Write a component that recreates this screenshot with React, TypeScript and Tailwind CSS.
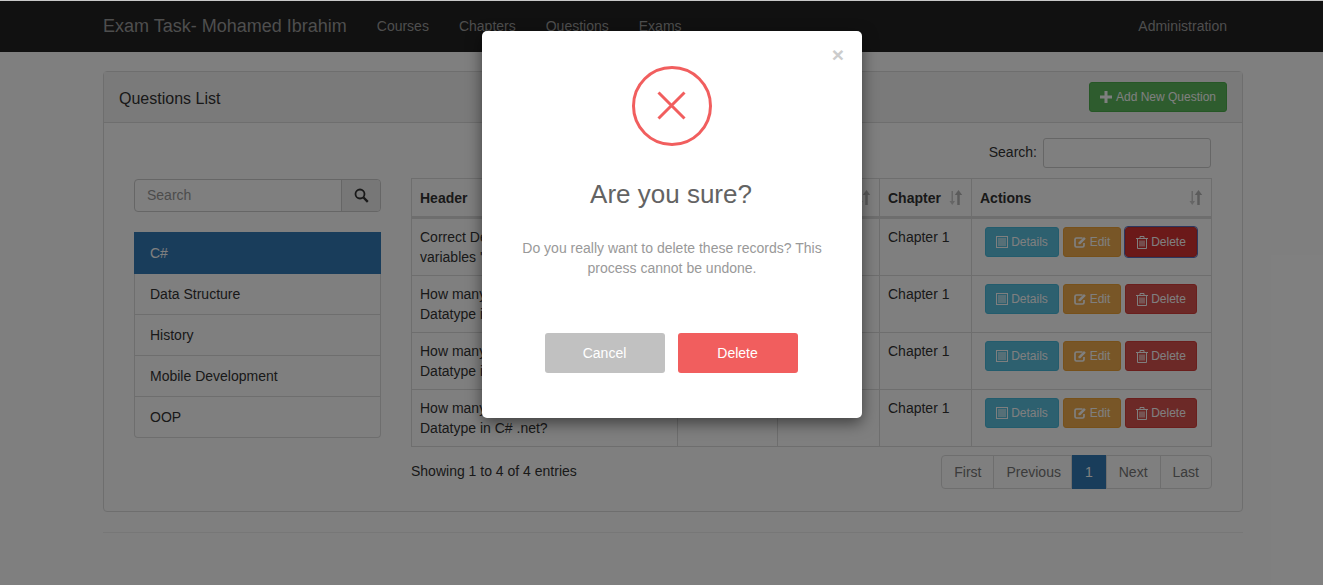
const TOPICS = ['Data Structure', 'History', 'Mobile Development', 'OOP']

const ROWS = [
  "Correct Declaration of Values to variables 'a' and 'b'?",
  'How many Bytes are stored by Long Datatype in C# .net?',
  'How many Bytes are stored by Int Datatype in C# .net?',
  'How many Bytes are stored by Byte Datatype in C# .net?',
]

const PAGES = ['First', 'Previous', '1', 'Next', 'Last']

function SortIcon() {
  return (
    <svg width="15" height="16" viewBox="0 0 15 16" className="text-[#333] opacity-35" fill="currentColor">
      <path d="M3.5 1h1.5v10h2l-2.75 4-2.75-4h2z" opacity="0.7" />
      <path d="M10.5 0l3.75 5h-2.5v10h-2.5V5H6.75z" />
    </svg>
  )
}

function PlusIcon() {
  return (
    <svg width="12" height="12" viewBox="0 0 12 12" fill="currentColor">
      <path d="M4.5 0h3v4.500h4.500v3H7.500v4.500h-3V7.500H0v-3h4.500z" />
    </svg>
  )
}

function SearchIcon() {
  return (
    <svg width="15" height="15" viewBox="0 0 15 15" fill="none" stroke="currentColor">
      <circle cx="6" cy="6" r="4.500" strokeWidth="1.800" />
      <path d="M9.500 9.500l4.300 4.300" strokeWidth="2.400" />
    </svg>
  )
}

function ListIcon() {
  return (
    <svg width="12" height="12" viewBox="0 0 12 12" fill="none" stroke="currentColor">
      <rect x="0.500" y="0.500" width="11" height="11" />
      <path d="M2 3h8M2 5h8M2 7h8M2 9h8" />
    </svg>
  )
}

function EditIcon() {
  return (
    <svg width="13" height="12" viewBox="0 0 13 12" fill="none" stroke="currentColor">
      <path d="M8.500 2H2.500a1.500 1.500 0 0 0-1.500 1.500v6A1.500 1.500 0 0 0 2.500 11h6A1.500 1.500 0 0 0 10 9.500V7" strokeWidth="1.700" />
      <path d="M4.500 8.200V6.500L10 1l1.800 1.800-5.500 5.400z" fill="currentColor" stroke="none" />
    </svg>
  )
}

function TrashIcon() {
  return (
    <svg width="12" height="13" viewBox="0 0 12 13" fill="none" stroke="currentColor">
      <path d="M0 2.500h12M4 2.500V.5h4v2" />
      <path d="M1.500 2.500v10h9v-10M4 4.500v6M6 4.500v6M8 4.500v6" />
    </svg>
  )
}

function ActionButtons({ focused }: { focused: boolean }) {
  return (
    <div className="ml-[5px] flex gap-1">
      <button className="flex h-[30px] w-[74px] items-center justify-center gap-[3px] rounded-[3px] border border-[#46b8da] bg-[#5bc0de] text-xs text-white">
        <ListIcon />
        Details
      </button>
      <button className="flex h-[30px] w-[58px] items-center justify-center gap-[3px] rounded-[3px] border border-[#eea236] bg-[#f0ad4e] text-xs text-white">
        <EditIcon />
        Edit
      </button>
      <button
        className={`flex h-[30px] w-[72px] items-center justify-center gap-[3px] rounded-[3px] border text-xs text-white ${
          focused ? 'border-[#c9302c] bg-[#d63232] outline outline-1 outline-[#5a6fc0]' : 'border-[#d43f3a] bg-[#d9534f]'
        }`}
      >
        <TrashIcon />
        Delete
      </button>
    </div>
  )
}

function DeleteModal() {
  return (
    <div className="absolute inset-0 bg-black/50">
      <div className="relative ml-[482px] mt-[31px] h-[387px] w-[380px] rounded-[5px] bg-white text-center shadow-[0_5px_15px_rgba(0,0,0,0.5)]">
        <span className="absolute right-[18px] top-[12px] text-[21px] font-bold leading-[24px] text-[#ccc]">×</span>
        <div className="flex justify-center pt-[35px]">
          <div className="flex h-20 w-20 items-center justify-center rounded-full border-[3px] border-[#f15e5e]">
            <svg width="30" height="30" viewBox="0 0 30 30" stroke="#f15e5e" strokeWidth="3">
              <path d="M1.500 1.500l26 26M27.500 1.500l-26 26" />
            </svg>
          </div>
        </div>
        <h4 className="mt-[30px] pr-[2px] text-[26px] leading-[36px] text-[#636363]">Are you sure?</h4>
        <p className="mx-auto mt-[26px] w-[320px] text-sm leading-5 text-[#999]">
          Do you really want to delete these records? This process cannot be undone.
        </p>
        <div className="mt-[55px] flex justify-center gap-[13px] pr-[2px]">
          <button className="h-10 w-[120px] rounded-[3px] bg-[#c1c1c1] text-sm text-white">Cancel</button>
          <button className="h-10 w-[120px] rounded-[3px] bg-[#f15e5e] text-sm text-white">Delete</button>
        </div>
      </div>
    </div>
  )
}

export default function App() {
  return (
    <div className="relative h-[585px] overflow-hidden bg-white text-sm leading-5 text-[#333] [font-family:'Liberation_Sans',Arial,sans-serif]">
      <nav className="mt-px h-[51px] bg-[#222]">
        <div className="ml-[103px] flex h-[50px] w-[1140px] items-center text-[#9d9d9d]">
          <span className="text-lg">Exam Task- Mohamed Ibrahim</span>
          <span className="ml-[30px]">Courses</span>
          <span className="ml-[30px]">Chapters</span>
          <span className="ml-[30px]">Questions</span>
          <span className="ml-[30px]">Exams</span>
          <span className="ml-auto mr-4">Administration</span>
        </div>
      </nav>

      <main className="ml-[103px] mt-[19px] w-[1140px]">
        <section className="h-[441px] rounded border border-[#ddd]">
          <header className="flex h-[51px] items-center justify-between border-b border-[#ddd] bg-[#f5f5f5] px-[15px]">
            <h3 className="pt-[4px] text-base">Questions List</h3>
            <button className="flex h-[30px] w-[138px] items-center justify-center gap-[4px] rounded-[3px] border border-[#4cae4c] bg-[#5cb85c] text-xs text-white">
              <PlusIcon />
              Add New Question
            </button>
          </header>

          <div className="flex px-[30px] pt-[15px]">
            <aside className="mt-[41px] w-[247px] shrink-0">
              <div className="flex h-[33px] rounded border border-[#ccc]">
                <span className="flex-1 pl-3 pt-[5px] text-[#999]">Search</span>
                <span className="flex w-[39px] items-center justify-center rounded-r border-l border-[#ccc] bg-[#eee]">
                  <SearchIcon />
                </span>
              </div>
              <ul className="mt-5">
                <li className="h-[42px] bg-[#337ab7] pl-[16px] pt-[11px] text-white">C#</li>
                {TOPICS.map((topic, i) => (
                  <li
                    key={topic}
                    className={`h-[41px] border-x border-b border-[#ddd] pl-[15px] pt-[10px] ${i === 3 ? 'rounded-b' : ''}`}
                  >
                    {topic}
                  </li>
                ))}
              </ul>
            </aside>

            <div className="ml-[30px] w-[801px]">
              <div className="flex items-center justify-end gap-[6px] pr-px">
                <label className="mb-[2px]">Search:</label>
                <span className="h-[30px] w-[168px] rounded-[3px] border border-[#ccc]" />
              </div>

              <table className="mt-[10px] w-[801px] table-fixed border-collapse border border-[#ddd]">
                <colgroup>
                  <col className="w-[266px]" />
                  <col className="w-[100px]" />
                  <col className="w-[102px]" />
                  <col className="w-[92px]" />
                  <col />
                </colgroup>
                <thead>
                  <tr className="h-[39px] border-b-[3px] border-[#ddd]">
                    {['Header', 'Type', 'Course', 'Chapter', 'Actions'].map((label) => (
                      <th key={label} className="border-x border-[#ddd] px-2 text-left font-bold">
                        <div className="flex items-center justify-between">
                          {label}
                          <SortIcon />
                        </div>
                      </th>
                    ))}
                  </tr>
                </thead>
                <tbody>
                  {ROWS.map((question, i) => (
                    <tr key={question} className="h-[57px] border-b border-[#ddd] align-top">
                      <td className="border-x border-[#ddd] px-2 py-2">{question}</td>
                      <td className="border-x border-[#ddd] px-2 py-2">MCQ</td>
                      <td className="border-x border-[#ddd] px-2 py-2">C#</td>
                      <td className="border-x border-[#ddd] px-2 py-2">Chapter 1</td>
                      <td className="border-x border-[#ddd] px-2 py-2">
                        <ActionButtons focused={i === 0} />
                      </td>
                    </tr>
                  ))}
                </tbody>
              </table>

              <div className="mt-2 flex items-center justify-between">
                <span className="mb-[2px]">Showing 1 to 4 of 4 entries</span>
                <div className="flex h-[34px] rounded border border-[#ddd] text-[#777]">
                  {PAGES.map((page, i) => (
                    <span
                      key={page}
                      className={`flex items-center ${i > 0 ? 'border-l border-[#ddd]' : ''} ${
                        page === '1'
                          ? '-my-px bg-[#337ab7] px-[13px] text-white'
                          : page === 'Previous'
                            ? 'pl-3 pr-[10px]'
                            : 'px-3'
                      }`}
                    >
                      {page}
                    </span>
                  ))}
                </div>
              </div>
            </div>
          </div>
        </section>
        <hr className="mt-5 border-[#eee]" />
      </main>

      <DeleteModal />
      <div className="absolute inset-x-0 top-0 h-px bg-[#c8c8c8]" />
    </div>
  )
}
